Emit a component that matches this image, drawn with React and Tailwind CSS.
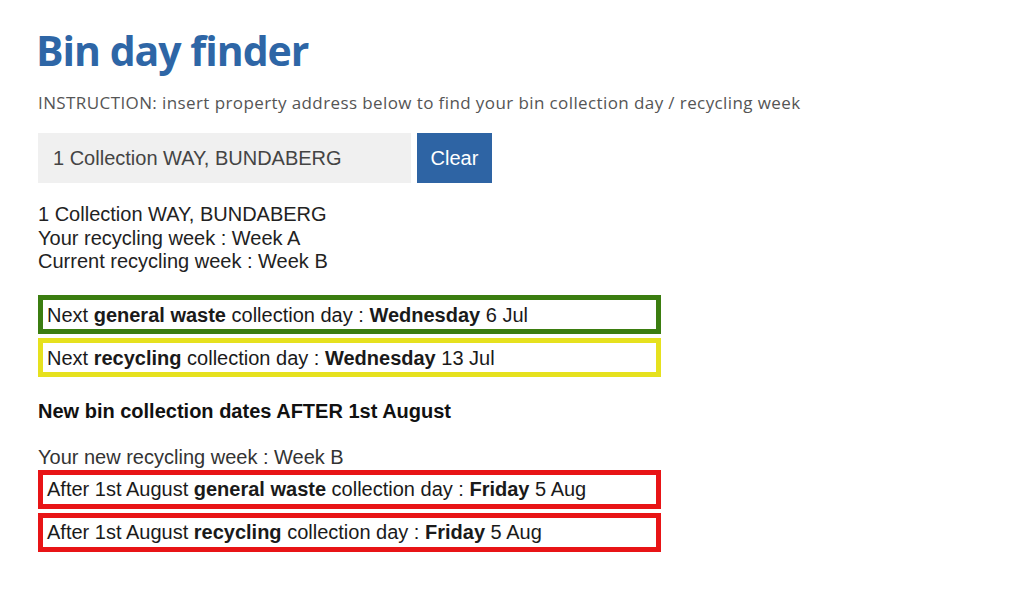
export default function App() {
  const body = { fontFamily: '"Liberation Sans", Arial, sans-serif' };
  const title = { fontFamily: '"Open Sans", "Noto Sans", sans-serif' };
  return (
    <div className="w-[1024px] h-[592px] bg-white pl-[38px] pt-[22px]" style={body}>
      <h1 className="text-[41px] leading-[56px] font-bold text-[#2e66a6] tracking-[-1px] -ml-[2px]" style={title}>
        Bin day finder
      </h1>
      <p className="mt-[13px] text-[17px] leading-[24px] text-[#555] tracking-[0.4px]" style={title}>
        INSTRUCTION: insert property address below to find your bin collection day / recycling week
      </p>
      <div className="mt-[18px] flex gap-[6px]">
        <div className="w-[373px] h-[50px] bg-[#f0f0f0] flex items-center pl-[15px] text-[20px] text-[#444]">
          1 Collection WAY, BUNDABERG
        </div>
        <button className="w-[75px] h-[50px] bg-[#2e64a4] text-white text-[20px] flex items-center justify-center">
          Clear
        </button>
      </div>
      <div className="mt-[20px] text-[20px] leading-[23.5px] text-[#222]">
        <div>1 Collection WAY, BUNDABERG</div>
        <div>Your recycling week : Week A</div>
        <div>Current recycling week : Week B</div>
      </div>
      <div className="mt-[21px] w-[623px] flex flex-col gap-[4px] text-[20px] text-[#1a1a1a]">
        <div className="h-[39px] border-[5px] border-[#3b7d10] flex items-center pl-[4px] pt-[2px]">
          <span>Next <b>general waste</b> collection day : <b>Wednesday</b> 6 Jul</span>
        </div>
        <div className="h-[39px] border-[5px] border-[#e6e11e] flex items-center pl-[4px] pt-[1px]">
          <span>Next <b>recycling</b> collection day : <b>Wednesday</b> 13 Jul</span>
        </div>
      </div>
      <div className="mt-[22px] text-[20px] font-bold text-[#111] leading-[24px]">
        New bin collection dates AFTER 1st August
      </div>
      <div className="mt-[22px] text-[20px] leading-[24px] text-[#333]">Your new recycling week : Week B</div>
      <div className="mt-[1px] w-[623px] flex flex-col gap-[4px] text-[20px] text-[#1a1a1a]">
        <div className="h-[39px] border-[5px] border-[#e81416] flex items-center pl-[4px]">
          <span>After 1st August <b>general waste</b> collection day : <b>Friday</b> 5 Aug</span>
        </div>
        <div className="h-[39px] border-[5px] border-[#e81416] flex items-center pl-[4px]">
          <span>After 1st August <b>recycling</b> collection day : <b>Friday</b> 5 Aug</span>
        </div>
      </div>
    </div>
  );
}
